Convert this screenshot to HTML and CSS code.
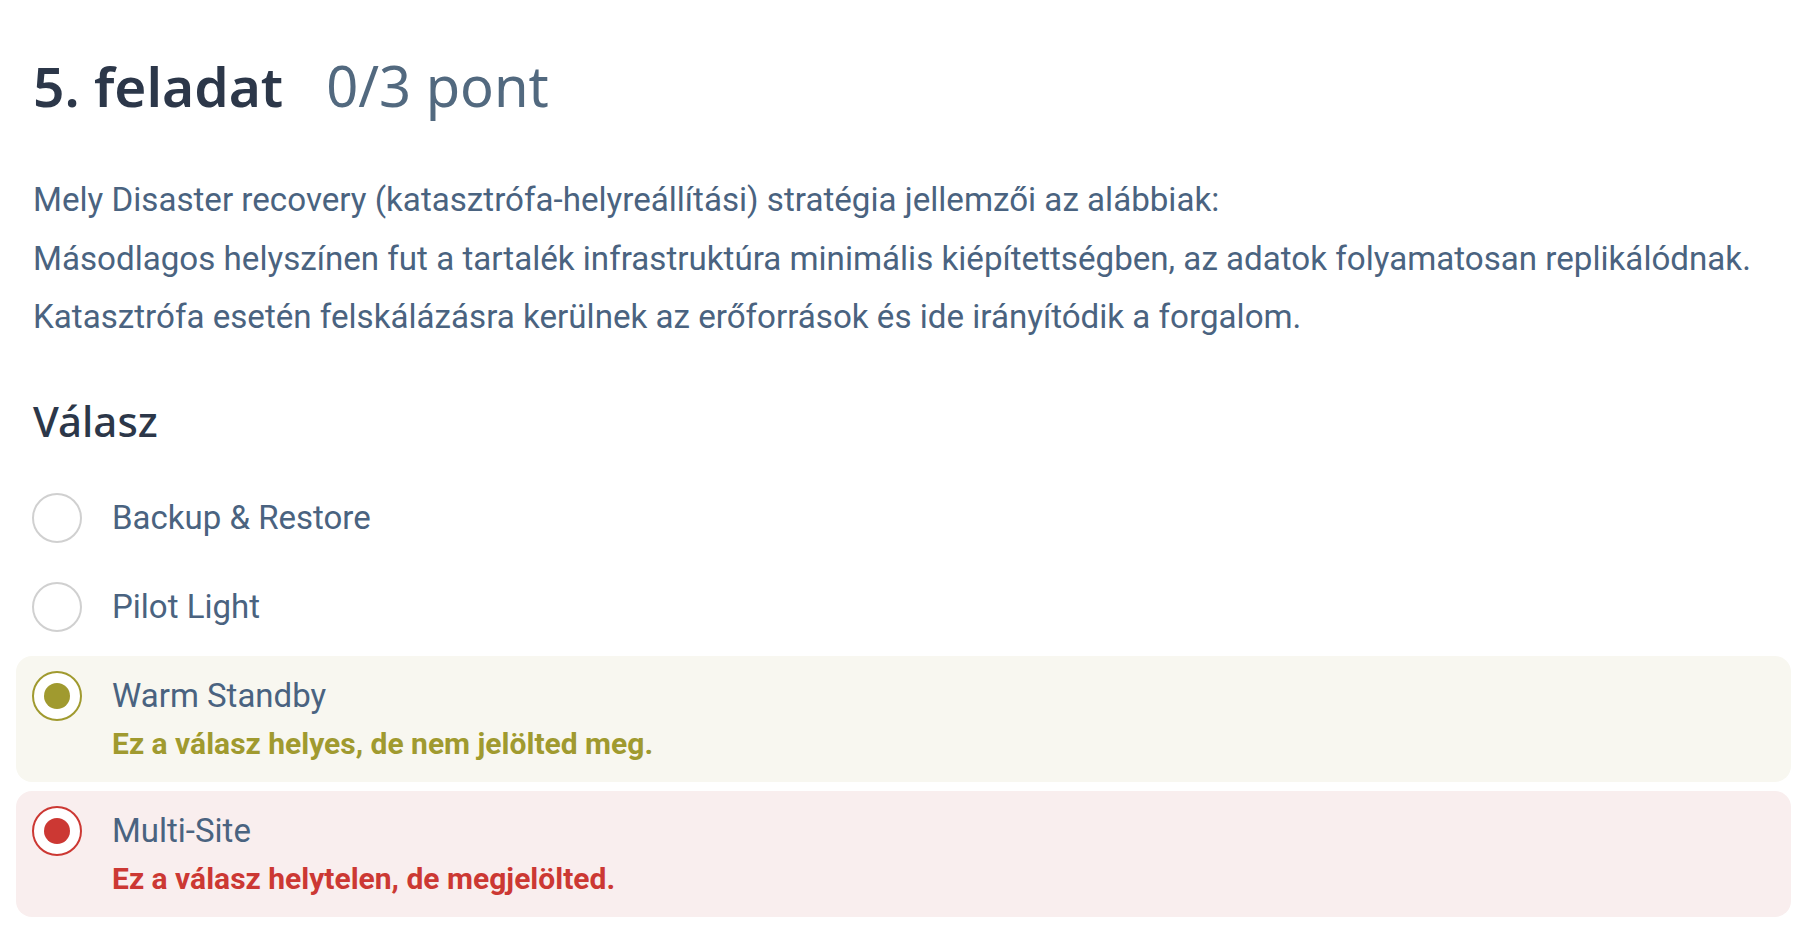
FILE: index.html
```html
<!DOCTYPE html>
<html lang="hu">
<head>
<meta charset="utf-8">
<title>5. feladat</title>
<link rel="stylesheet" href="styles.css">
</head>
<body>
<main class="task">
  <h1 class="task-title"><span class="task-num">5. feladat</span><span class="task-points">0/3 pont</span></h1>
  <p class="question">Mely Disaster recovery (katasztrófa-helyreállítási) stratégia jellemzői az alábbiak:<br>Másodlagos helyszínen fut a tartalék infrastruktúra minimális kiépítettségben, az adatok folyamatosan replikálódnak.<br>Katasztrófa esetén felskálázásra kerülnek az erőforrások és ide irányítódik a forgalom.</p>
  <h2 class="answer-title">Válasz</h2>
  <ul class="options">
    <li class="option">
      <span class="radio"></span>
      <div class="option-body"><div class="option-label">Backup &amp; Restore</div></div>
    </li>
    <li class="option">
      <span class="radio"></span>
      <div class="option-body"><div class="option-label">Pilot Light</div></div>
    </li>
    <li class="option option-missed">
      <span class="radio radio-checked"></span>
      <div class="option-body">
        <div class="option-label">Warm Standby</div>
        <div class="feedback">Ez a válasz helyes, de nem jelölted meg.</div>
      </div>
    </li>
    <li class="option option-wrong">
      <span class="radio radio-checked"></span>
      <div class="option-body">
        <div class="option-label">Multi-Site</div>
        <div class="feedback">Ez a válasz helytelen, de megjelölted.</div>
      </div>
    </li>
  </ul>
</main>
</body>
</html>
```

FILE: styles.css
```css
html, body {
  margin: 0;
  padding: 0;
  background: #ffffff;
}

body {
  font-family: Roboto, "Liberation Sans", sans-serif;
  color: #4a6380;
}

.task {
  padding: 51px 29px 0 16px;
}

.task-title {
  margin: 0;
  padding-left: 17px;
  display: flex;
  align-items: baseline;
  gap: 43px;
  font-family: "Noto Sans", sans-serif;
  font-size: 55px;
  line-height: 68px;
  font-weight: 400;
}

.task-num {
  color: #2c3749;
  font-weight: 600;
}

.task-points {
  color: #52697f;
  font-weight: 400;
  font-size: 56px;
}

.question {
  margin: 51px 0 0 0;
  padding-left: 17px;
  font-size: 33.15px;
  line-height: 58.5px;
  color: #4a6380;
}

.answer-title {
  margin: 50px 0 0 0;
  padding-left: 17px;
  font-family: "Noto Sans", sans-serif;
  font-size: 42px;
  line-height: 48px;
  font-weight: 500;
  color: #2c3749;
}

.options {
  list-style: none;
  margin: 33px 0 0 0;
  padding: 0;
  display: flex;
  flex-direction: column;
  gap: 9px;
}

.option {
  display: flex;
  align-items: flex-start;
  gap: 30px;
  padding: 15px 16px;
  border-radius: 16px;
}

.option-missed {
  background: #f8f7f0;
}

.option-wrong {
  background: #f9eeee;
}

.radio {
  flex: none;
  box-sizing: border-box;
  width: 50px;
  height: 50px;
  border: 2px solid #d0d0d0;
  border-radius: 50%;
  background: #ffffff;
  display: flex;
  align-items: center;
  justify-content: center;
}

.radio-checked::after {
  content: "";
  width: 26px;
  height: 26px;
  border-radius: 50%;
  background: currentColor;
}

.option-missed .radio {
  border-color: #a09a2f;
  color: #a09a2f;
}

.option-wrong .radio {
  border-color: #cc3833;
  color: #cc3833;
}

.option-label {
  font-size: 33px;
  line-height: 50px;
  color: #4a6380;
}

.feedback {
  font-size: 30px;
  line-height: 46px;
  font-weight: 700;
}

.option-missed .feedback {
  color: #a09a2f;
}

.option-wrong .feedback {
  color: #cc3833;
}
```
